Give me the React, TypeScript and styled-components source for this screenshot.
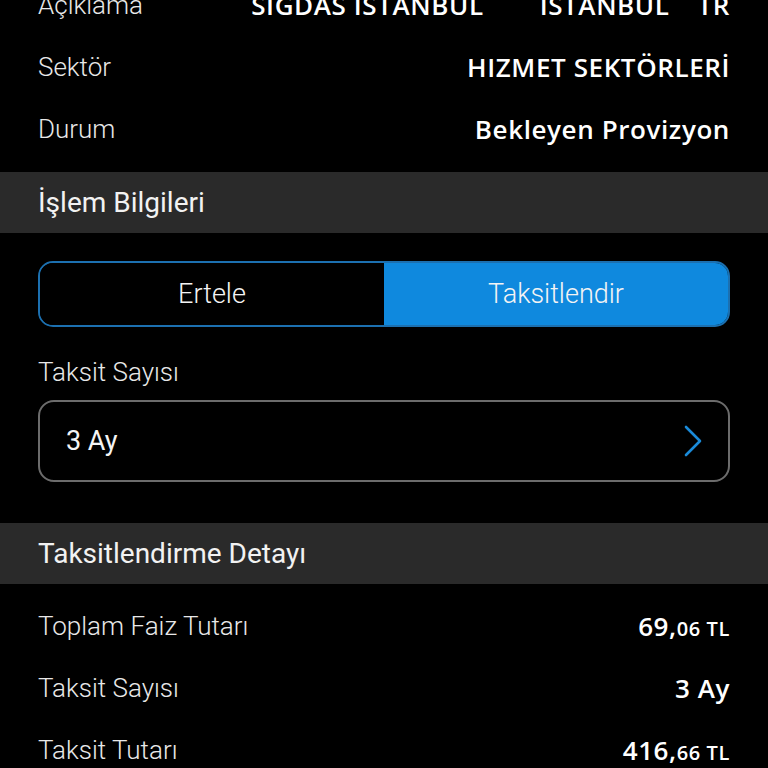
import React from 'react'
import styled, { createGlobalStyle } from 'styled-components'

const GlobalStyle = createGlobalStyle`
    html, body {
        margin: 0;
        padding: 0;
        background: #000;
        overflow: hidden;
    }
    body {
        font-family: Roboto, "Liberation Sans", sans-serif;
        color: #ececec;
    }
`

const Page = styled.div`
    width: 768px;
    height: 768px;
    overflow: hidden;
    background: #000;
`

// the screen is scrolled a little, first row is half out of view
const Scroller = styled.div`
    margin-top: -26px;
`

const InfoList = styled.div<{ $top?: number; $bottom?: number }>`
    display: flex;
    flex-direction: column;
    padding: ${p => p.$top || 0}px 38px ${p => p.$bottom || 0}px;
`

const Row = styled.div`
    display: flex;
    align-items: center;
    justify-content: space-between;
    height: 62px;
`

const Label = styled.span`
    font-size: 26px;
    font-weight: 300;
    color: #e8e8e8;
`

const Value = styled.span`
    display: flex;
    align-items: baseline;
    font-family: "Open Sans", Roboto, sans-serif;
    font-size: 26px;
    font-weight: 600;
    letter-spacing: 0.6px;
    color: #fff;
    white-space: nowrap;
`

const Chunk = styled.span<{ $gap?: number }>`
    margin-left: ${p => p.$gap || 0}px;
`

const Small = styled.span`
    font-size: 20px;
`

const SectionHeader = styled.div`
    display: flex;
    align-items: center;
    height: 61px;
    padding: 0 38px;
    background: #2a2a2a;
    font-size: 28px;
    font-weight: 400;
    color: #f2f2f2;
`

const Block = styled.div`
    padding: 28px 38px 41px;
    display: flex;
    flex-direction: column;
`

const Segment = styled.div`
    display: flex;
    height: 66px;
    border: 2px solid #1c70b0;
    border-radius: 15px;
    overflow: hidden;
    box-sizing: border-box;
`

const SegmentItem = styled.button<{ $active?: boolean }>`
    flex: 1;
    border: none;
    margin: 0;
    padding: 0;
    font-family: inherit;
    font-size: 27px;
    font-weight: 300;
    color: #f4f4f4;
    background: ${p => (p.$active ? '#0f89de' : '#000')};
`

const FieldLabel = styled.div`
    margin-top: 30px;
    height: 30px;
    display: flex;
    align-items: center;
    font-size: 26px;
    font-weight: 300;
    color: #e8e8e8;
`

const Select = styled.div`
    margin-top: 13px;
    height: 82px;
    box-sizing: border-box;
    border: 2px solid #6c6c6c;
    border-radius: 16px;
    display: flex;
    align-items: center;
    justify-content: space-between;
    padding: 0 25px 0 26px;
    font-size: 27px;
    color: #f4f4f4;
`

const Chevron = () => (
    <svg width="20" height="32" viewBox="0 0 20 32" fill="none">
        <path d="M3 2 L17 16 L3 30" stroke="#1a8ad8" strokeWidth="2.6" strokeLinecap="round" strokeLinejoin="round" />
    </svg>
)

const Amount = ({ whole, cents }: { whole: string; cents: string }) => (
    <Value>
        {whole},<Small>{cents} TL</Small>
    </Value>
)

export default function App() {
    return (
        <Page>
            <GlobalStyle />
            <Scroller>
                <InfoList $bottom={12}>
                    <Row>
                        <Label>Açıklama</Label>
                        <Value>
                            <Chunk>SIGDAS ISTANBUL</Chunk>
                            <Chunk $gap={56}>ISTANBUL</Chunk>
                            <Chunk $gap={28}>TR</Chunk>
                        </Value>
                    </Row>
                    <Row>
                        <Label>Sektör</Label>
                        <Value>HIZMET SEKTÖRLERİ</Value>
                    </Row>
                    <Row>
                        <Label>Durum</Label>
                        <Value>Bekleyen Provizyon</Value>
                    </Row>
                </InfoList>

                <SectionHeader>İşlem Bilgileri</SectionHeader>

                <Block>
                    <Segment>
                        <SegmentItem>Ertele</SegmentItem>
                        <SegmentItem $active>Taksitlendir</SegmentItem>
                    </Segment>
                    <FieldLabel>Taksit Sayısı</FieldLabel>
                    <Select>
                        <span>3 Ay</span>
                        <Chevron />
                    </Select>
                </Block>

                <SectionHeader>Taksitlendirme Detayı</SectionHeader>

                <InfoList $top={11}>
                    <Row>
                        <Label>Toplam Faiz Tutarı</Label>
                        <Amount whole="69" cents="06" />
                    </Row>
                    <Row>
                        <Label>Taksit Sayısı</Label>
                        <Value>3 Ay</Value>
                    </Row>
                    <Row>
                        <Label>Taksit Tutarı</Label>
                        <Amount whole="416" cents="66" />
                    </Row>
                </InfoList>
            </Scroller>
        </Page>
    )
}
